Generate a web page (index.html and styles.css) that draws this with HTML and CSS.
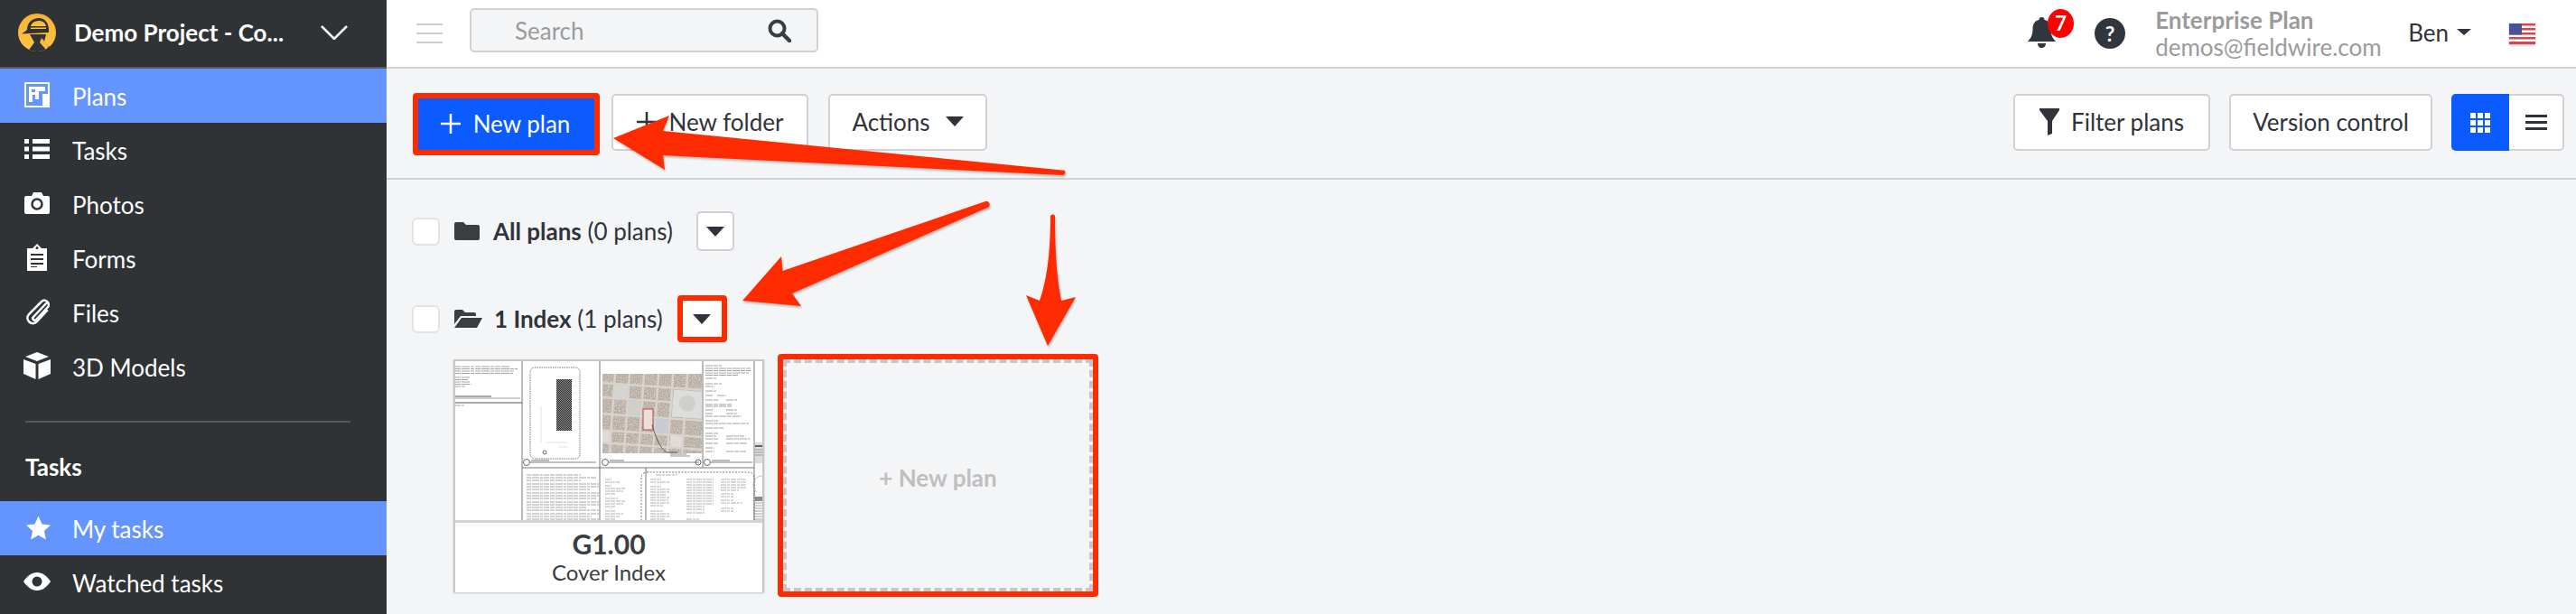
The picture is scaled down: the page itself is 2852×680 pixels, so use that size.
FILE: index.html
```html
<!DOCTYPE html>
<html lang="en">
<head>
    <meta charset="UTF-8">
    <meta name="viewport" content="width=device-width, initial-scale=1.0">
    <title>Plans - Fieldwire</title>
    <link rel="stylesheet" href="styles.css">
</head>
<body>
    <aside class="sidebar">
        <div class="project">
            <svg class="logo" viewBox="0 0 42 42">
                <defs>
                    <linearGradient id="gold" x1="0" y1="0" x2="0" y2="1">
                        <stop offset="0" stop-color="#f9b233"/>
                        <stop offset="1" stop-color="#ffc545"/>
                    </linearGradient>
                    <clipPath id="disc"><circle cx="21" cy="21" r="21"/></clipPath>
                </defs>
                <circle cx="21" cy="21" r="21" fill="url(#gold)"/>
                <g clip-path="url(#disc)">
                    <path d="M10 18C10 10 16 5 23 5s11 6 11 13v3L4 22.500z" fill="#303336"/>
                    <path d="M14 14c1-4 5-6 9-6s7 2 8 6z" fill="url(#gold)"/>
                    <rect x="14" y="15.500" width="17" height="1.500" fill="url(#gold)"/>
                    <path d="M13 23h18l-2 8 6 6-4 6H10l8-11z" fill="#303336"/>
                    <path d="M26 27l8 9-3 4-7-8z" fill="url(#gold)"/>
                </g>
            </svg>
            <span class="project-name">Demo Project - Co...</span>
            <svg class="chevron" viewBox="0 0 30 16"><path d="M1 1l14 14L29 1" fill="none" stroke="#fff" stroke-width="2.500"/></svg>
        </div>
        <nav>
            <a class="nav-item active">
                <span class="nav-icon">
                    <svg width="28" height="28" viewBox="0 0 28 28"><rect width="28" height="28" fill="#fff"/><path d="M2 2h24v11h-6v13H2z" fill="#6495ff"/><path d="M5 5h18v5h-7v9h-4v-5H9v8H5z" fill="#fff"/><rect x="8" y="8" width="4" height="3" fill="#6495ff"/></svg>
                </span>
                Plans
            </a>
            <a class="nav-item">
                <span class="nav-icon">
                    <svg width="28" height="22" viewBox="0 0 28 22" fill="#fff"><path d="M0 0h5v5H0zM9 0h19v5H9zM0 8.500h5v5H0zM9 8.500h19v5H9zM0 17h5v5H0zM9 17h19v5H9z"/></svg>
                </span>
                Tasks
            </a>
            <a class="nav-item">
                <span class="nav-icon">
                    <svg width="28" height="24" viewBox="0 0 28 24"><path d="M2 4h6l2-4h9l2 4h5a2 2 0 0 1 2 2v16a2 2 0 0 1-2 2H2a2 2 0 0 1-2-2V6a2 2 0 0 1 2-2z" fill="#fff"/><circle cx="14" cy="13" r="5.500" fill="none" stroke="#303336" stroke-width="2.500"/></svg>
                </span>
                Photos
            </a>
            <a class="nav-item">
                <span class="nav-icon">
                    <svg width="22" height="30" viewBox="0 0 22 30"><path d="M0 5h6l5-5 5 5h6v25H0z" fill="#fff"/><circle cx="11" cy="4.500" r="1.500" fill="#303336"/><path d="M4 11h14v2H4zM4 16h14v2H4zM4 21h14v2H4z M4 25h7v1H4z" fill="#303336"/></svg>
                </span>
                Forms
            </a>
            <a class="nav-item">
                <span class="nav-icon">
                    <svg width="27" height="30" viewBox="0 0 27 30"><path d="M24 5l-15 16c-2 2 1 5 3 3L25 10c3-4-3-10-7-6L4 18c-5 6 3 14 9 8l11-12" fill="none" stroke="#fff" stroke-width="2.500" stroke-linecap="round"/></svg>
                </span>
                Files
            </a>
            <a class="nav-item">
                <span class="nav-icon">
                    <svg width="30" height="30" viewBox="0 0 30 30" fill="#fff"><path d="M15 0l13 5-13 5L2 5zM0 8l13.500 5v17L0 24zM30 8l-13.500 5v17L30 24z"/></svg>
                </span>
                3D Models
            </a>
        </nav>
        <div class="side-divider"></div>
        <div class="side-heading">Tasks</div>
        <nav>
            <a class="nav-item active">
                <span class="nav-icon">
                    <svg class="star" width="28" height="27" viewBox="0 0 28 27"><path d="M14 0l4.200 9.300L28 10.400l-7.300 6.700 2 9.900L14 22l-8.700 5 2-9.900L0 10.400l9.800-1.100z" fill="#fff"/></svg>
                </span>
                My tasks
            </a>
            <a class="nav-item">
                <span class="nav-icon">
                    <svg width="30" height="20" viewBox="0 0 30 20"><path d="M0 10C4 4 9 0 15 0s11 4 15 10c-4 6-9 10-15 10S4 16 0 10z" fill="#fff"/><circle cx="15" cy="10" r="5.500" fill="#303336"/></svg>
                </span>
                Watched tasks
            </a>
        </nav>
    </aside>

    <main class="main">
        <header class="topbar">
            <div class="hamburger"><span></span><span></span><span></span></div>
            <div class="search">
                <span class="search-text">Search</span>
                <svg width="26" height="26" viewBox="0 0 26 26"><circle cx="10.500" cy="10.500" r="8" fill="none" stroke="#3a3c3f" stroke-width="4"/><path d="M16 16l8 8" stroke="#3a3c3f" stroke-width="4.500" stroke-linecap="round"/></svg>
            </div>
            <div class="top-right">
                <div class="bell">
                    <svg width="31" height="35" viewBox="0 0 31 35" fill="#30353e"><path d="M15.500 0c2 0 3 1 3 3 5 1 7 5 7 10 0 7 2 10 5.500 14H0c3.500-4 5.500-7 5.500-14 0-5 2-9 7-10 0-2 1-3 3-3z"/><path d="M11 29h9c0 3-2 5-4.500 5S11 32 11 29z"/></svg>
                    <span class="badge">7</span>
                </div>
                <div class="help">?</div>
                <div class="account">
                    <div class="plan-name">Enterprise Plan</div>
                    <div class="plan-mail">demos@fieldwire.com</div>
                </div>
                <div class="user">Ben<span class="caret small"></span></div>
                <svg class="flag" width="29" height="23" viewBox="0 0 29 23">
                    <rect width="29" height="23" fill="#fff"/>
                    <path d="M0 0h29v2.500H0zM0 5h29v2.500H0zM0 10h29v2.500H0zM0 15h29v2.500H0zM0 20h29v3H0z" fill="#d9444c"/>
                    <rect width="14" height="12.500" fill="#4a5296"/>
                </svg>
            </div>
        </header>

        <section class="toolbar">
            <div class="callout callout-btn">
                <button class="btn btn-primary">
                    <svg class="plus" width="22" height="22" viewBox="0 0 22 22"><path d="M11 0v22M0 11h22" stroke="currentColor" stroke-width="2.500"/></svg>
                    New plan
                </button>
            </div>
            <button class="btn btn-folder">
                <svg class="plus" width="22" height="22" viewBox="0 0 22 22"><path d="M11 0v22M0 11h22" stroke="currentColor" stroke-width="2.500"/></svg>
                New folder
            </button>
            <button class="btn btn-actions">Actions<span class="caret"></span></button>
            <div class="toolbar-right">
                <button class="btn btn-filter">
                    <svg width="22" height="30" viewBox="0 0 22 30" fill="#30333a"><path d="M0 0h22v2L14 14v14l-5 2V14L0 2z"/></svg>
                    Filter plans
                </button>
                <button class="btn btn-version">Version control</button>
                <div class="view-toggle">
                    <span class="view-btn selected">
                        <svg width="22" height="22" viewBox="0 0 22 22" fill="#fff"><path d="M0 0h6v6H0zM8 0h6v6H8zM16 0h6v6h-6zM0 8h6v6H0zM8 8h6v6H8zM16 8h6v6h-6zM0 16h6v6H0zM8 16h6v6H8zM16 16h6v6h-6z"/></svg>
                    </span>
                    <span class="view-btn">
                        <svg width="24" height="17" viewBox="0 0 24 17" fill="#30333a"><path d="M0 0h24v3H0zM0 7h24v3H0zM0 14h24v3H0z"/></svg>
                    </span>
                </div>
            </div>
        </section>

        <section class="content">
            <div class="folder-row">
                <span class="checkbox"></span>
                <svg class="folder-icon" width="28" height="20" viewBox="0 0 28 20"><path d="M2 0h8l3 3h13a2 2 0 0 1 2 2v13a2 2 0 0 1-2 2H2a2 2 0 0 1-2-2V2a2 2 0 0 1 2-2z" fill="#3c3d3f"/></svg>
                <span class="folder-name"><b>All plans</b> (0 plans)</span>
                <button class="drop-btn drop-first"><span class="caret"></span></button>
            </div>
            <div class="folder-row row-index">
                <span class="checkbox"></span>
                <svg class="folder-icon" width="31" height="20" viewBox="0 0 31 20" fill="#3c3d3f"><path d="M2 0h7l3 3h10a2 2 0 0 1 2 2v2H7L0 16V2a2 2 0 0 1 2-2z"/><path d="M8 9h23l-6 11H0z"/></svg>
                <span class="folder-name name-index"><b>1 Index</b> (1 plans)</span>
                <div class="callout callout-drop">
                    <button class="drop-btn"><span class="caret"></span></button>
                </div>
            </div>

            <div class="plan-grid">
                <div class="plan-card">
                    <svg class="plan-thumb" width="340" height="176" viewBox="0 0 340 176">
                        <defs>
                            <pattern id="checker" width="2" height="2" patternUnits="userSpaceOnUse">
                                <rect width="2" height="2" fill="#8c8c8c"/>
                                <rect width="1" height="1" fill="#2e2e2e"/>
                                <rect x="1" y="1" width="1" height="1" fill="#2e2e2e"/>
                            </pattern>
                            <filter id="speckle" x="0" y="0" width="100%" height="100%">
                                <feTurbulence type="fractalNoise" baseFrequency=".75" numOctaves="2" seed="4"/>
                                <feColorMatrix type="matrix" values="0 0 0 0 .46  0 0 0 0 .40  0 0 0 0 .34  3 0 0 0 -.8"/>
                            </filter>
                            <clipPath id="mapclip"><rect x="163" y="14" width="110" height="88"/></clipPath>
                        </defs>
                        <rect width="340" height="176" fill="#fff"/>

                        <!-- sheet frame -->
                        <path d="M74 0v176M160 0v176M274 0v118M331 0v176M74 118h257M211 118v58" stroke="#666" stroke-width=".9" fill="none"/>
                        <path d="M0 41h72" stroke="#888" stroke-width=".8"/>
                        <path d="M0 46h74" stroke="#555" stroke-width="1"/>
                        <path d="M0 39h40" stroke="#555" stroke-width="1.200"/>

                        <!-- left notes -->
                        <path d="M0 6h60M0 8.500h69M0 11h66M0 13.500h64M0 18h16M0 20.500h14M0 23h16M0 25.500h18M0 28h11M0 49h10" stroke="#8a8a8a" stroke-width=".8" stroke-dasharray="6 1 9 1 4 1"/>

                        <!-- key plan -->
                        <rect x="83" y="7" width="55" height="101" rx="5" fill="none" stroke="#555" stroke-width=".8" stroke-dasharray="1.500 1"/>
                        <rect x="112" y="20" width="17" height="57" fill="url(#checker)"/>
                        <path d="M95 50v40M100 90h25M115 95h10" stroke="#ccc" stroke-width=".6"/>
                        <circle cx="99" cy="101" r="2" fill="none" stroke="#444" stroke-width=".8"/>

                        <!-- vicinity map -->
                        <g clip-path="url(#mapclip)">
                            <rect x="163" y="14" width="110" height="88" fill="#d6d0ca"/>
                            <rect x="163" y="14" width="110" height="88" filter="url(#speckle)"/>
                            <g transform="rotate(4 218 58)">
                                <path d="M174 0v120M190 0v120M206 0v120M222 0v120M238 0v120M254 0v120M150 28h140M150 44h140M150 62h140M150 80h140M150 94h140" stroke="#d9d3cf" stroke-width="2.500" fill="none"/>
                                <rect x="240" y="30" width="34" height="30" fill="#dddedb"/>
                                <circle cx="256" cy="44" r="9" fill="#cfd0cc"/>
                                <rect x="223" y="63" width="14" height="16" fill="#c9ccd0"/>
                                <rect x="175" y="29" width="14" height="14" fill="#d5d6d2"/>
                                <rect x="191" y="45" width="14" height="16" fill="#d0cfc9"/>
                                <rect x="164" y="81" width="9" height="12" fill="#dedcda"/>
                                <rect x="240" y="81" width="13" height="12" fill="#e0dcd8"/>
                            </g>
                            <rect x="208" y="53" width="11" height="23" fill="#e9e0dc" stroke="#c8424a" stroke-width="1"/>
                        </g>
                        <path d="M218 70c3 12 8 26 16 31h12" fill="none" stroke="#333" stroke-width=".7"/>
                        <path d="M238 103h18M238 105h22" stroke="#777" stroke-width=".8"/>

                        <!-- sheet titles -->
                        <path d="M83 112h73M170 112h100M283 112h46" stroke="#666" stroke-width=".8"/>
                        <path d="M84 110h20M171 110h16M284 110h20" stroke="#777" stroke-width="1"/>
                        <g fill="none" stroke="#444" stroke-width=".8">
                            <circle cx="79" cy="112" r="3.500"/>
                            <circle cx="166" cy="112" r="3.500"/>
                            <circle cx="269" cy="112" r="3"/>
                            <circle cx="279" cy="112" r="3.500"/>
                        </g>

                        <!-- project data -->
                        <path d="M277 5h18M277 8h50M277 10.500h50M277 13h48M277 15.500h36M277 19h12M277 25h18M277 28h10M277 33h12M277 38h8M290 38h10M277 43h14M300 43h12M277 48h30M277 50h30M277 54h8M300 54h12M277 58h8M300 58h12M277 61h40M277 66h14M277 69h48M277 74h20M277 80h14M277 83h12M300 83h20M277 86h14M300 86h26M277 91h14M300 91h24M277 96h10M277 100h10M300 100h22" stroke="#888" stroke-width=".8" stroke-dasharray="8 1 5 1"/>

                        <!-- general notes -->
                        <path d="M79 126h60M79 129h78M79 132h60M79 136h80M79 139h80M79 142h70M79 146h80M79 149h80M79 152h78M79 156h80M79 159h80M79 162h66M79 165h80M79 169h80M79 172h72M79 175h80" stroke="#8d8d8d" stroke-width=".8" stroke-dasharray="5 1 8 1 3 1 6 1"/>
                        <path d="M166 131h7M166 134h16M166 138h7M166 141h22M166 144h20M166 147h12M166 152h14M166 155h22M166 158h20M166 161h12M166 166h12M166 169h20M166 172h16M166 175h12" stroke="#999" stroke-width=".8" stroke-dasharray="5 1"/>

                        <!-- sheet index -->
                        <rect x="206" y="123" width="125" height="70" rx="6" fill="none" stroke="#555" stroke-width=".8" stroke-dasharray="2 1.500"/>
                        <path d="M222 126h24M216 131h12M216 134h22M216 139h12M216 142h22M216 145h22M216 148h18M216 151h22M216 154h20M216 157h22M216 160h14M216 166h14M216 169h22M216 172h22M216 175h16M256 131h30M256 134h30M256 137h30M256 140h30M256 143h30M256 146h30M256 149h30M256 152h30M256 155h30M256 158h30M256 161h20M256 164h20M256 168h20M256 175h14M294 131h28M294 134h28M294 137h28M294 140h28M294 143h20M294 147h14M294 150h14M294 154h14M294 157h24M294 163h14M294 166h14" stroke="#999" stroke-width=".8" stroke-dasharray="6 1 3 1"/>

                        <!-- right strip -->
                        <rect x="332" y="90" width="8" height="23" fill="#dcdcdc"/>
                        <path d="M332 94h8" stroke="#111" stroke-width="1.200"/>
                        <path d="M332 98h8M332 101h8M332 104h8" stroke="#888" stroke-width=".8"/>
                        <path d="M340 127a10 10 0 0 0-6 18" stroke="#aaa" stroke-width=".7" fill="none"/>
                        <rect x="332" y="150" width="8" height="5" fill="#8b8b8b"/>
                        <path d="M332 157h8M332 160h8M332 163h8M332 166h8M332 169h8M332 172h8M332 175h8" stroke="#888" stroke-width=".8"/>
                    </svg>
                    <div class="plan-label">
                        <div class="plan-number">G1.00</div>
                        <div class="plan-title">Cover Index</div>
                    </div>
                </div>
                <div class="callout callout-new">
                    <div class="plan-new">+ New plan</div>
                </div>
            </div>
        </section>
    </main>

    <!-- annotation arrows drawn over the screenshot -->
    <svg class="arrows" width="2852" height="680" viewBox="0 0 2852 680">
        <path d="M1176 188.500L734 145l7-17-62 25 57 35-2-16 442 22a3 3 0 0 0 2-5.500z"/>
        <path d="M1091 223L866.500 300 865 284l-43 49 65 6-10-14 216-95a3.500 3.500 0 0 0-2-7z"/>
        <path d="M1163 240c0 40-4 70-12 93l-15-6 24 56 31-54-16 4c-5-25-7-55-7-93a2.500 2.500 0 0 0-5 0z"/>
    </svg>
</body>
</html>
```

FILE: styles.css
```css
* {
    box-sizing: border-box;
}
html, body {
    margin: 0;
    height: 680px;
    overflow: hidden;
}
body {
    display: flex;
    font-family: Lato, "Open Sans", sans-serif;
    font-size: 26px;
    color: #30333a;
    background: #f4f5f7;
}
button {
    font-family: inherit;
    font-size: inherit;
    color: inherit;
    padding: 0;
}

/* sidebar */
.sidebar {
    width: 428px;
    flex: none;
    background: #303336;
    color: #fff;
}
.project {
    height: 76px;
    display: flex;
    align-items: center;
    padding: 0 0 2px 20px;
    border-bottom: 2px solid #55585a;
}
.logo {
    width: 42px;
    height: 42px;
    flex: none;
}
.project-name {
    margin-left: 20px;
    width: 273px;
    font-weight: 700;
    white-space: nowrap;
}
.chevron {
    width: 30px;
    height: 16px;
}
.nav-item {
    height: 60px;
    padding-top: 2px;
    display: flex;
    align-items: center;
}
.nav-item.active {
    background: #6495ff;
}
.nav-icon {
    width: 80px;
    padding-left: 26px;
    padding-right: 24px;
    margin-top: -4px;
    display: flex;
    justify-content: center;
    flex: none;
}
.star {
    margin-left: 3px;
}
.side-divider {
    height: 2px;
    margin: 30px 40px 0 28px;
    background: #55585a;
}
.side-heading {
    height: 87px;
    padding: 11px 0 0 28px;
    display: flex;
    align-items: center;
    font-weight: 700;
}

/* top bar */
.main {
    flex: 1;
    min-width: 0;
}
.topbar {
    height: 76px;
    background: #fff;
    border-bottom: 2px solid #cfd1d4;
    display: flex;
    align-items: center;
    padding: 0 45px 0 33px;
}
.hamburger {
    width: 29px;
    margin-right: 30px;
    display: flex;
    flex-direction: column;
    gap: 8px;
}
.hamburger span {
    height: 2px;
    background: #cdcdcd;
}
.search {
    width: 386px;
    height: 49px;
    margin-top: -7px;
    padding: 0 28px 0 48px;
    display: flex;
    align-items: center;
    justify-content: space-between;
    background: #f4f5f7;
    border: 2px solid #cfd1d4;
    border-radius: 5px;
}
.search-text {
    color: #9b9b9b;
}
.top-right {
    margin-left: auto;
    display: flex;
    align-items: center;
}
.bell {
    position: relative;
    height: 35px;
    margin-top: -2px;
}
.badge {
    position: absolute;
    left: 22px;
    top: -9px;
    width: 29px;
    height: 32px;
    border-radius: 50%;
    background: #f00;
    color: #fff;
    font-size: 22px;
    font-weight: 700;
    line-height: 32px;
    text-align: center;
}
.help {
    width: 34px;
    height: 34px;
    margin-left: 43px;
    border-radius: 50%;
    background: #30353e;
    color: #fff;
    font-size: 23px;
    font-weight: 700;
    line-height: 34px;
    text-align: center;
}
.account {
    width: 248px;
    margin-left: 33px;
    color: #9b9b9b;
    line-height: 30px;
    white-space: nowrap;
}
.plan-name {
    font-weight: 700;
}
.user {
    margin-left: 32px;
    margin-top: -3px;
    display: flex;
    align-items: center;
}
.flag {
    margin-left: 42px;
    filter: blur(.5px) drop-shadow(0 1px 1px rgba(0,0,0,0.3));
}

/* carets */
.caret {
    display: block;
    width: 0;
    height: 0;
    border-left: 10px solid transparent;
    border-right: 10px solid transparent;
    border-top: 11px solid #30333a;
}
.caret.small {
    margin-left: 9px;
    border-left-width: 8px;
    border-right-width: 8px;
    border-top-width: 7px;
}

/* toolbar */
.toolbar {
    height: 123px;
    padding: 28px 13px 0 29px;
    display: flex;
    align-items: flex-start;
    border-bottom: 2px solid #cfd1d4;
}
.toolbar-right {
    margin-left: auto;
    display: flex;
    gap: 21px;
}
.btn {
    height: 63px;
    padding-bottom: 2px;
    background: #fff;
    border: 2px solid #cfd1d4;
    border-radius: 5px;
    display: flex;
    align-items: center;
    justify-content: center;
    white-space: nowrap;
}
.plus {
    margin-right: 14px;
    flex: none;
}
.callout {
    border: 6px solid #ff2b00;
    border-radius: 4px;
    flex: none;
}
.callout-btn {
    width: 207px;
    height: 69px;
    margin-top: -1px;
    margin-right: 13px;
    background: #fff;
}
.btn-primary {
    width: 195px;
    height: 57px;
    padding-right: 2px;
    background: #0b5bff;
    border: none;
    border-radius: 0;
    color: #fff;
}
.btn-folder {
    width: 218px;
    margin-right: 22px;
}
.btn-actions {
    width: 176px;
    gap: 17px;
}
.btn-filter {
    width: 218px;
    gap: 13px;
}
.btn-version {
    width: 225px;
}
.view-toggle {
    width: 125px;
    height: 63px;
    display: flex;
    background: #fff;
    border: 2px solid #cfd1d4;
    border-radius: 5px;
}
.view-btn {
    flex: 1;
    display: flex;
    align-items: center;
    justify-content: center;
}
.view-btn.selected {
    flex: none;
    width: 64px;
    margin: -2px 0 -2px -2px;
    background: #0b5bff;
    border-radius: 5px 0 0 5px;
}

/* plan list */
.content {
    padding: 35px 0 0 28px;
}
.folder-row {
    display: flex;
    align-items: center;
    height: 44px;
}
.row-index {
    height: 52px;
    margin-top: 49px;
}
.checkbox {
    width: 31px;
    height: 31px;
    background: #fff;
    border: 2px solid #e2e3e5;
    border-radius: 6px;
    flex: none;
    margin-right: 16px;
}
.folder-icon {
    flex: none;
}
.folder-name {
    margin-left: 15px;
    white-space: nowrap;
}
.folder-name b {
    font-weight: 700;
}
.name-index {
    margin-left: 13px;
}
.drop-btn {
    width: 42px;
    height: 44px;
    background: #fff;
    border: 2px solid #cfd1d4;
    border-radius: 5px;
    display: flex;
    align-items: center;
    justify-content: center;
}
.drop-first {
    margin-left: 26px;
}
.callout-drop {
    width: 55px;
    height: 52px;
    margin-left: 16px;
}
.callout-drop .drop-btn {
    width: 43px;
    height: 40px;
    border: none;
}
.plan-grid {
    display: flex;
    align-items: flex-start;
    gap: 15px;
    margin: 13px 0 0 46px;
}
.plan-card {
    width: 344px;
    height: 258px;
    margin-top: 6px;
    background: #fff;
    border: 2px solid #c6c6c6;
    border-bottom: none;
    box-shadow: 0 1px 2px rgba(0,0,0,0.2);
}
.plan-thumb {
    display: block;
    border-bottom: 3px solid #d4d4d4;
    height: 179px;
    filter: blur(.25px);
}
.plan-label {
    text-align: center;
    color: #3c3d3f;
}
.plan-number {
    font-size: 30px;
    font-weight: 700;
    line-height: 34px;
    margin-top: 6px;
}
.plan-title {
    font-size: 24px;
    line-height: 30px;
}
.callout-new {
    width: 355px;
    height: 269px;
}
.plan-new {
    height: 100%;
    padding-top: 5px;
    border: 4px dashed #c6c6c6;
    display: flex;
    align-items: center;
    justify-content: center;
    color: #bfbfbf;
    font-weight: 700;
}

/* annotations */
.arrows {
    position: absolute;
    left: 0;
    top: 0;
    fill: #ff2b00;
    filter: drop-shadow(1px 2px 1px rgba(0,0,0,0.25));
    pointer-events: none;
}
```
